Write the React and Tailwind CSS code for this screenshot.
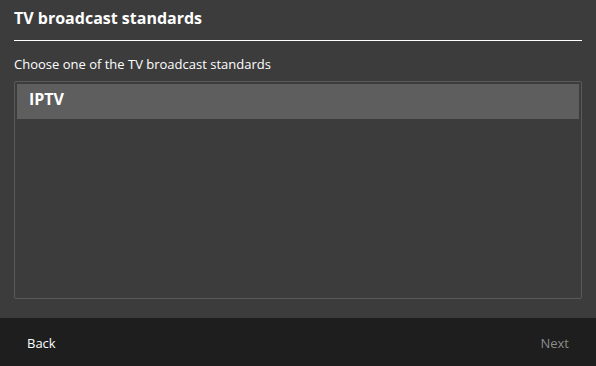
export default function App() {
  return (
    <div className="w-[596px] h-[366px] bg-[#3c3c3c] flex flex-col" style={{ fontFamily: '"Open Sans", "Noto Sans", sans-serif' }}>
      <div className="flex-1 flex flex-col px-[14px]">
        <div className="h-[41px] border-b border-white pt-[10px]">
          <h1 className="text-[16px] font-bold text-white leading-none">TV broadcast standards</h1>
        </div>
        <p className="text-[13px] text-white leading-none mt-[17px]">Choose one of the TV broadcast standards</p>
        <div className="mt-[10px] h-[218px] border border-[#5a5a5a] rounded-[2px] p-[2px]">
          <div className="h-[35px] bg-[#5e5e5e] px-[12px] pt-[7px]">
            <span className="block text-[16px] font-bold text-white leading-none">IPTV</span>
          </div>
        </div>
      </div>
      <div className="h-[48px] bg-[#1e1e1e] flex items-start justify-between px-[27px] pt-[19px]">
        <span className="text-[13px] text-white leading-none">Back</span>
        <span className="text-[13px] text-[#8c8c8c] leading-none">Next</span>
      </div>
    </div>
  );
}
